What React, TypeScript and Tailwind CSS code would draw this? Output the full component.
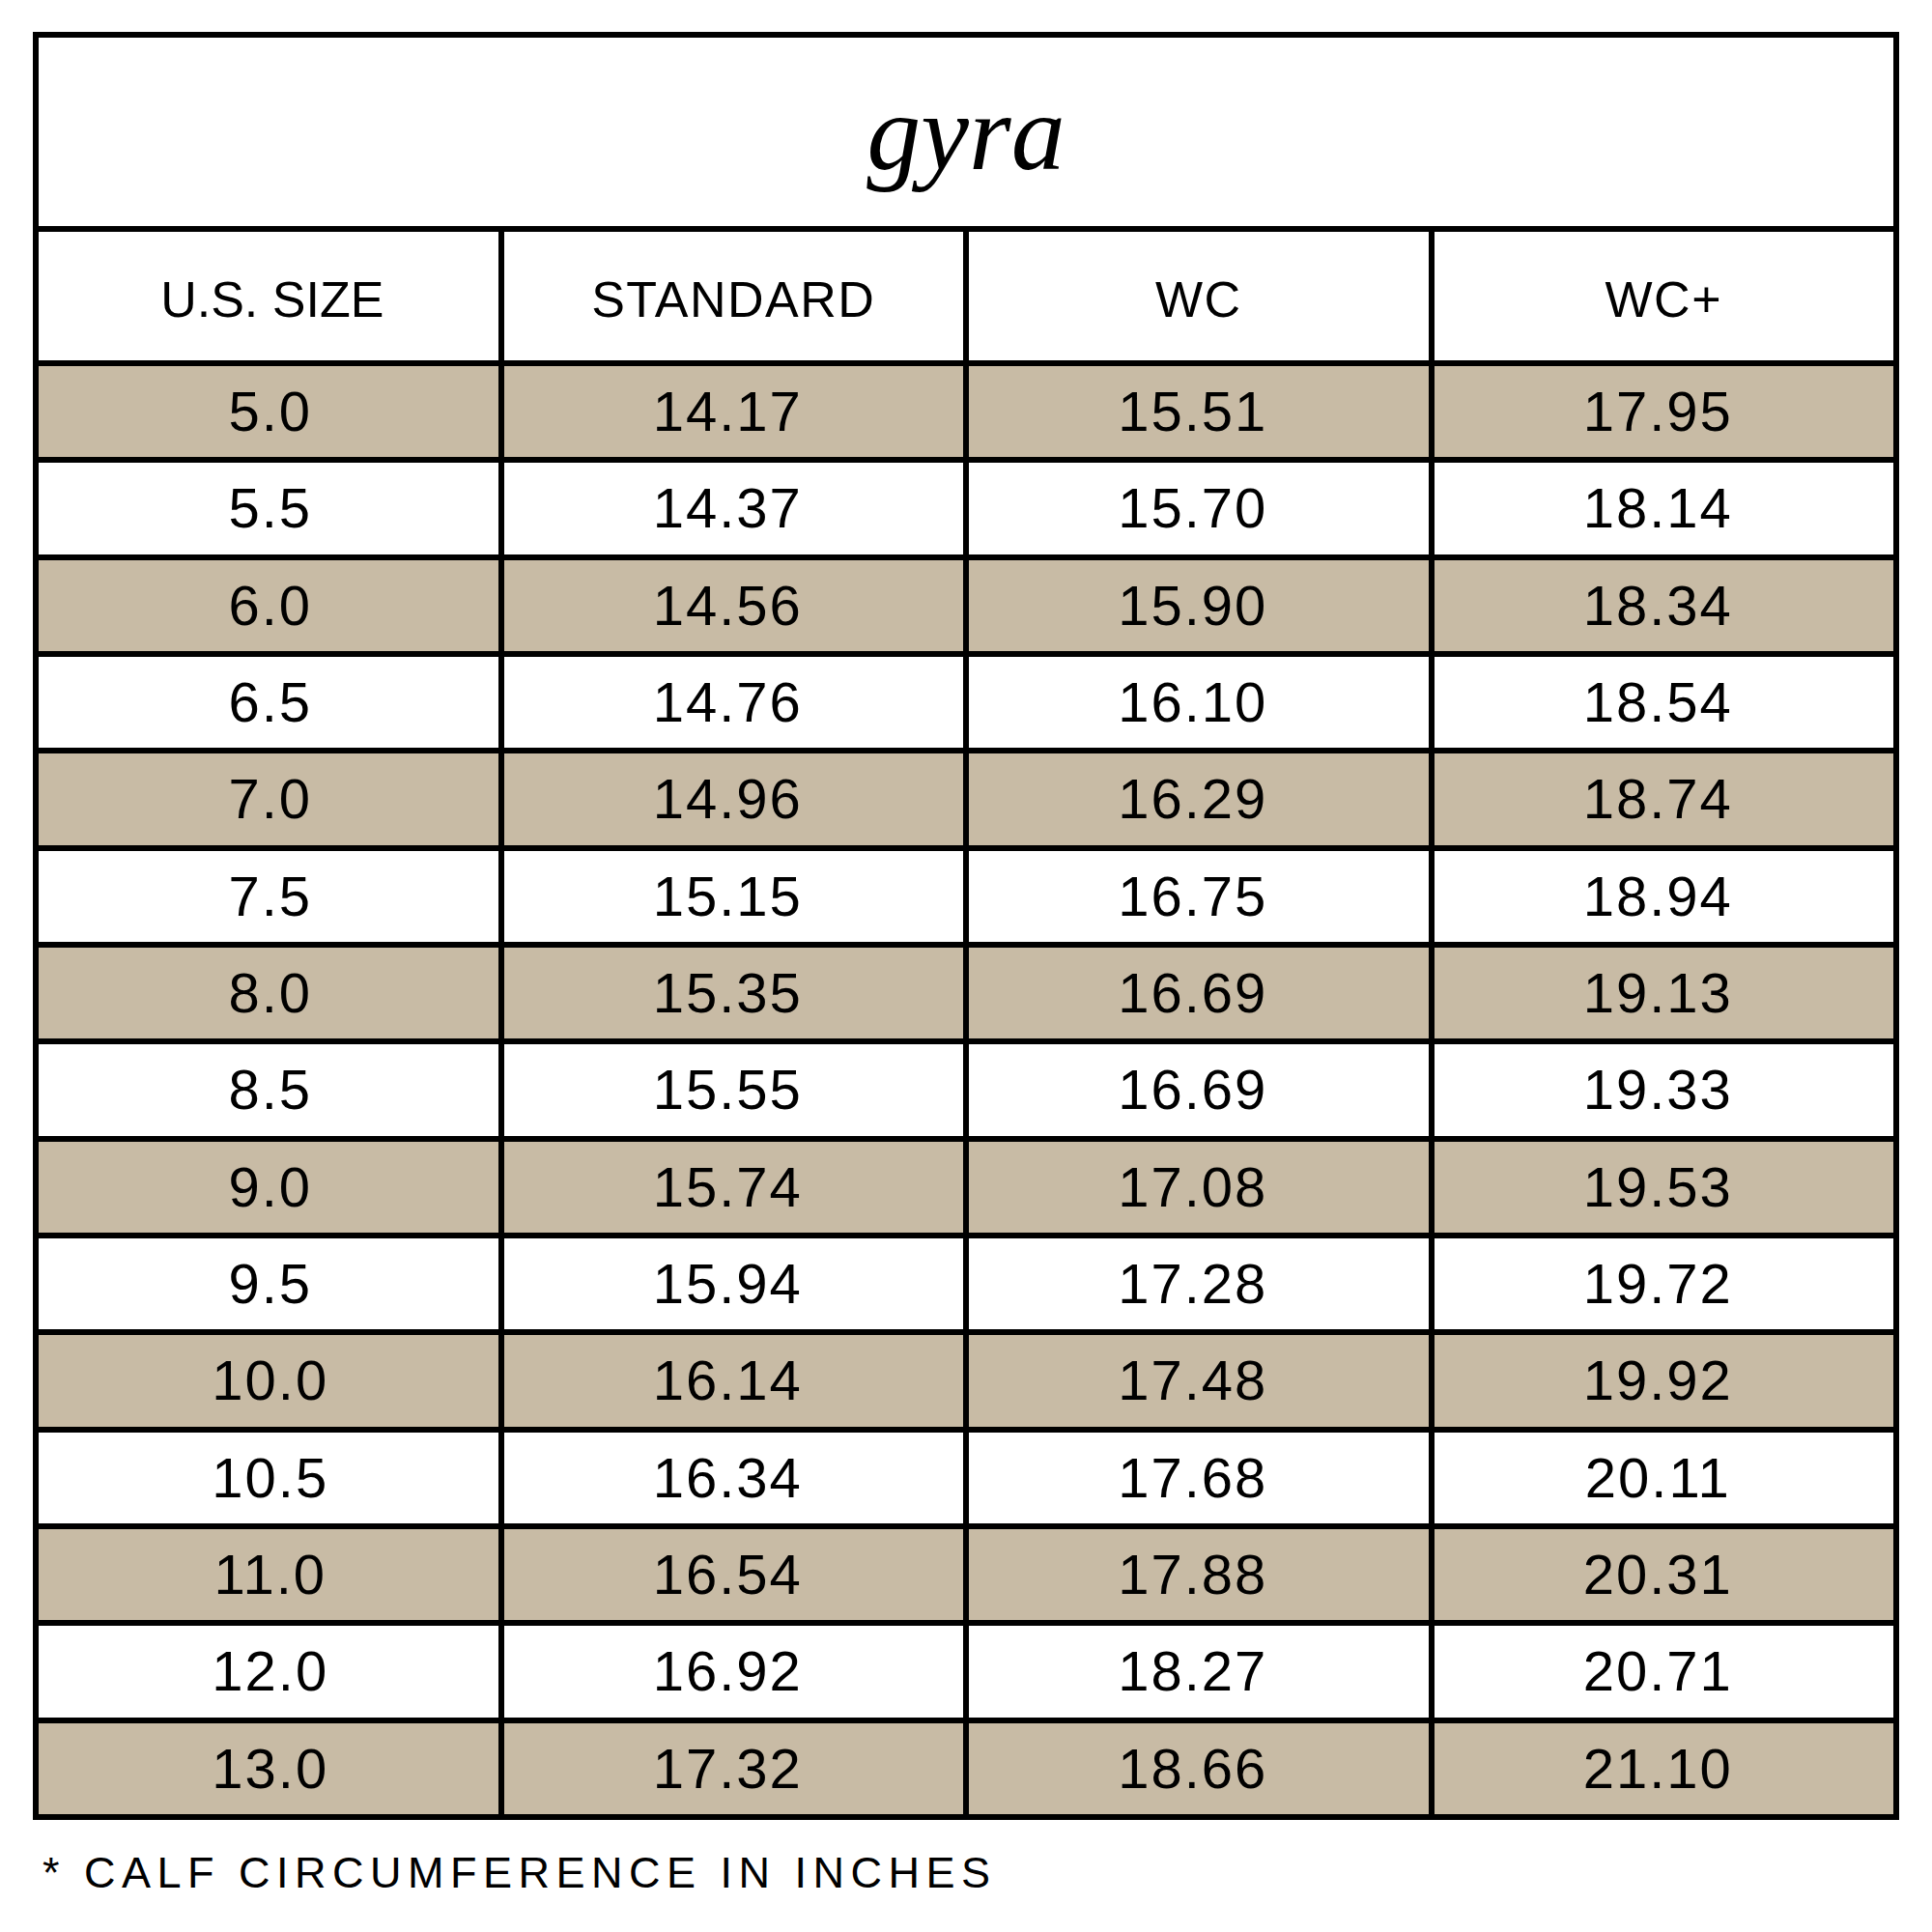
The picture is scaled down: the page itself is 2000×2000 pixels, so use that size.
const HEADERS = ["U.S. SIZE", "STANDARD", "WC", "WC+"];

// size, standard, wide calf, wide calf plus
const ROWS: [string, string, string, string][] = [
  ["5.0", "14.17", "15.51", "17.95"],
  ["5.5", "14.37", "15.70", "18.14"],
  ["6.0", "14.56", "15.90", "18.34"],
  ["6.5", "14.76", "16.10", "18.54"],
  ["7.0", "14.96", "16.29", "18.74"],
  ["7.5", "15.15", "16.75", "18.94"],
  ["8.0", "15.35", "16.69", "19.13"],
  ["8.5", "15.55", "16.69", "19.33"],
  ["9.0", "15.74", "17.08", "19.53"],
  ["9.5", "15.94", "17.28", "19.72"],
  ["10.0", "16.14", "17.48", "19.92"],
  ["10.5", "16.34", "17.68", "20.11"],
  ["11.0", "16.54", "17.88", "20.31"],
  ["12.0", "16.92", "18.27", "20.71"],
  ["13.0", "17.32", "18.66", "21.10"],
];

export default function App() {
  return (
    <div className="min-h-screen bg-white pl-[34px] pt-[33px] font-['Liberation_Sans',Arial,sans-serif] text-black">
      <div className="w-[1932px] border-[6px] border-black">
        <div className="flex h-[195px] items-center justify-center">
          <h1 className="font-['Liberation_Serif','Times_New_Roman',serif] text-[112px] italic leading-none">gyra</h1>
        </div>
        <div className="grid h-[1644px] grid-cols-4 grid-rows-[133px_repeat(15,1fr)] gap-[6px] border-t-[6px] border-black bg-black">
          {HEADERS.map((h, j) => (
            <div
              key={h}
              className={`flex items-center justify-center bg-white pt-[6px] text-[52px] leading-none ${
                j === 0 ? "pl-[8px] tracking-[0px]" : "tracking-[1.5px]"
              }`}
            >
              {h}
            </div>
          ))}
          {ROWS.map((row, i) =>
            row.map((v, j) => (
              <div
                key={`${i}-${j}`}
                className={`flex items-center justify-center text-[58px] leading-none tracking-[2px] ${
                  i % 2 === 0 ? "bg-[#c8bba5]" : "bg-white"
                } ${j > 0 ? "pr-[12px]" : "pl-[4px]"}`}
              >
                {v}
              </div>
            ))
          )}
        </div>
      </div>
      <p className="ml-[10px] mt-[32px] text-[45px] leading-none tracking-[6.5px]">* CALF CIRCUMFERENCE IN INCHES</p>
    </div>
  );
}
